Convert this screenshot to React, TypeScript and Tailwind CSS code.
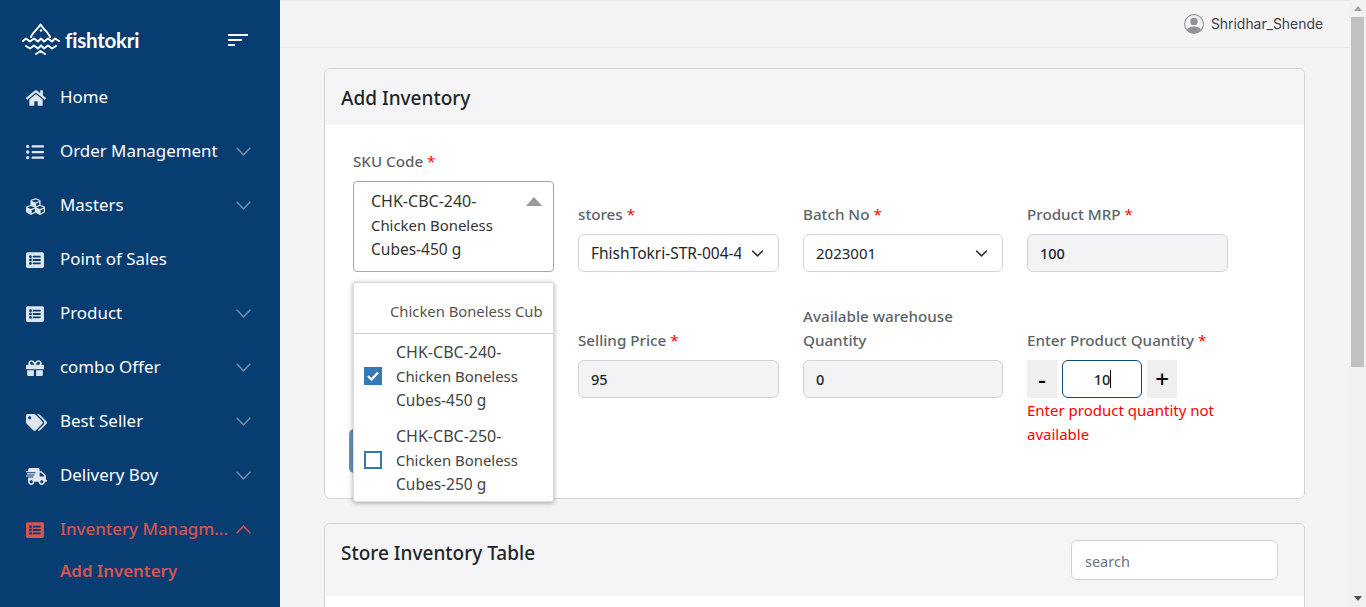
import React from "react";
import { FaHome, FaListUl, FaCubes, FaListAlt, FaGift, FaTags, FaShippingFast } from "react-icons/fa";
import { BsPersonCircle } from "react-icons/bs";

const font = "font-['Noto_Sans','Open_Sans',sans-serif]";

function Logo() {
  return (
    <div className="flex items-center">
      <svg width="38" height="34" viewBox="0 0 38 34" fill="none" stroke="white" strokeWidth="2" strokeLinecap="round" strokeLinejoin="round">
        <path d="M9 14 C10 10 15 7 18.5 1.5 C22 7 27 10 28 14" />
        <circle cx="19" cy="7.5" r="1.2" fill="white" stroke="none" />
        <path d="M1 18 L4 15.5 L8 18.5 L12 15.5 L16 18.5 L19 15.5 L22 18.5 L26 15.5 L30 18.5 L33 15.5 L37 18" />
        <path d="M4 23 L8 25.5 L12 22.5 L16 25.5 L19 22.5 L22 25.5 L26 22.5 L30 25.5 L34 23" />
        <path d="M14 31 L18.5 28 L23 31" />
      </svg>
      <span className="ml-[5px] text-[20.5px] font-bold leading-none tracking-[-0.2px] text-white font-['Lato',sans-serif]">fishtokri</span>
    </div>
  );
}

function Chevron({ up, color }: { up?: boolean; color: string }) {
  return (
    <svg width="15" height="9" viewBox="0 0 15 9" fill="none" stroke={color} strokeWidth="1.5" className="mb-[2px] shrink-0">
      <path d={up ? "M0.7 8.3L7.5 1.2l6.8 7.1" : "M0.7 0.7L7.5 7.8l6.8-7.1"} />
    </svg>
  );
}

function NavItem({ icon, label, arrow = true }: { icon: React.ReactNode; label: string; arrow?: boolean }) {
  return (
    <div className="flex h-[54px] items-center pl-[26px] pr-[29px] text-white">
      <span className="flex w-[34px] items-center text-[#dfe6ee]">{icon}</span>
      <span className="flex-1 pb-[1px] text-[16.9px] leading-none">{label}</span>
      {arrow && <Chevron color="#6f8cab" />}
    </div>
  );
}

function Sidebar() {
  return (
    <aside className="flex w-[280px] shrink-0 flex-col overflow-hidden bg-[#083d72]">
      <div className="flex h-[71px] shrink-0 items-end justify-between pl-[22px] pr-[32px] pb-[14px]">
        <Logo />
        <svg width="20" height="12" viewBox="0 0 20 12" className="mb-[11px] fill-white">
          <rect x="0" y="0" width="20" height="2" />
          <rect x="0" y="5" width="14" height="2" />
          <rect x="0" y="10" width="7" height="2" />
        </svg>
      </div>
      <NavItem icon={<FaHome size={20} />} label="Home" arrow={false} />
      <NavItem icon={<FaListUl size={18} />} label="Order Management" />
      <NavItem icon={<FaCubes size={19} />} label="Masters" />
      <NavItem icon={<FaListAlt size={18} />} label="Point of Sales" arrow={false} />
      <NavItem icon={<FaListAlt size={18} />} label="Product" />
      <NavItem icon={<FaGift size={18} />} label="combo Offer" />
      <NavItem icon={<FaTags size={21} />} label="Best Seller" />
      <NavItem icon={<FaShippingFast size={21} />} label="Delivery Boy" />
      <div className="flex h-[54px] shrink-0 items-center pl-[26px] pr-[29px] text-[#d9534f]">
        <span className="flex w-[34px] items-center"><FaListAlt size={18} /></span>
        <span className="flex-1 whitespace-nowrap pb-[1px] text-[16.9px] font-medium leading-none">Inventery Managm...</span>
        <Chevron up color="#d9534f" />
      </div>
      <div className="pl-[60px] pt-[6px] text-[16.9px] font-semibold leading-none text-[#d9534f]">Add Inventery</div>
    </aside>
  );
}

const labelCls = "block text-[15.2px] font-medium leading-[24px] text-[#5d6369]";
const Star = () => <span className="font-normal text-[#ff0000]"> *</span>;

function Field({ label, children, className = "" }: { label: React.ReactNode; children: React.ReactNode; className?: string }) {
  return (
    <div className={`flex flex-col ${className}`}>
      <label className={labelCls}>{label}</label>
      {children}
    </div>
  );
}

function ReadOnly({ value }: { value: string }) {
  return (
    <div className="mt-[8px] flex h-[38px] items-center rounded-[6px] border border-[#ced4da] bg-[#f3f3f6] px-[12px] pt-[1px] text-[14.5px] font-medium text-[#212529]">{value}</div>
  );
}

function SelectBox({ value, w, size }: { value: string; w: string; size: string }) {
  return (
    <div className={`mt-[8px] flex h-[38px] items-center rounded-[6px] border border-[#ced4da] bg-white pl-[12px] pr-[14px] text-[#212529] ${w}`}>
      <span className={`flex-1 overflow-hidden whitespace-nowrap pt-[1px] ${size}`}>{value}</span>
      <svg width="13" height="13" viewBox="0 0 16 16" fill="none" stroke="#343a40" strokeWidth="2" strokeLinecap="round" strokeLinejoin="round" className="ml-[10px] shrink-0"><path d="M2 5l6 6 6-6" /></svg>
    </div>
  );
}

function Check({ checked }: { checked?: boolean }) {
  return (
    <span className={`flex h-[18px] w-[18px] shrink-0 items-center justify-center border-2 border-[#337ab7] ${checked ? "bg-[#337ab7]" : "bg-white"}`}>
      {checked && (
        <svg width="12" height="10" viewBox="0 0 12 10" fill="none" stroke="white" strokeWidth="2.4"><path d="M1 5l3.5 3.5L11 1.5" /></svg>
      )}
    </span>
  );
}

function SkuLines({ code, tail }: { code: string; tail: string }) {
  return (
    <div className="leading-[24px]">
      <div className="text-[16px]">{code}</div>
      <div className="text-[14.9px]">Chicken Boneless</div>
      <div className="text-[15.5px]">{tail}</div>
    </div>
  );
}

function Option({ checked, code, tail }: { checked?: boolean; code: string; tail: string }) {
  return (
    <div className="flex items-center py-[6px] pl-[10px]">
      <Check checked={checked} />
      <div className="ml-[14px] text-[#444]">
        <SkuLines code={code} tail={tail} />
      </div>
    </div>
  );
}

function SkuColumn() {
  return (
    <div className="relative w-[201px]">
      <label className={labelCls}>SKU Code<Star /></label>
      <div className="relative mt-[8px] flex h-[91px] items-center rounded-[4px] border border-[#a6a6a6] bg-white pb-[4px] pl-[17px] text-[#333]">
        <SkuLines code="CHK-CBC-240-" tail="Cubes-450 g" />
        <span className="absolute right-[11px] top-[15px] h-0 w-0 border-x-[8px] border-b-[9px] border-x-transparent border-b-[#999]" />
      </div>
      <div className="absolute left-[-4px] top-[280px] h-[44px] w-[20px] rounded-[5px] bg-[#6a94bd]" />
      <div className="absolute left-0 top-[133px] z-10 w-[201px] rounded-[3px] border border-[#ddd] bg-white pb-[0px] shadow-[0_1px_5px_rgba(0,0,0,0.35)]">
        <div className="flex h-[51px] items-center overflow-hidden border-b border-[#ccc] pl-[36px] pr-[9px] pt-[6px] text-[14.8px] text-[#555]">
          <span className="overflow-hidden whitespace-nowrap">Chicken Boneless Cub</span>
        </div>
        <Option checked code="CHK-CBC-240-" tail="Cubes-450 g" />
        <div className="-mb-[1px]">
          <Option code="CHK-CBC-250-" tail="Cubes-250 g" />
        </div>
      </div>
    </div>
  );
}

function Card({ title, right, headerCls, children }: { title: string; right?: React.ReactNode; headerCls: string; children?: React.ReactNode }) {
  return (
    <section className="rounded-[6px] border border-[#d3d4d6] bg-white">
      <div className={`flex justify-between rounded-t-[6px] bg-[#f5f5f7] pl-[16px] pr-[26px] ${headerCls}`}>
        <h2 className="text-[19px] font-medium leading-none text-[#212529]">{title}</h2>
        {right}
      </div>
      {children}
    </section>
  );
}

export default function App() {
  return (
    <div className={`flex h-[607px] w-[1366px] overflow-hidden bg-[#f4f4f6] ${font}`}>
      <Sidebar />
      <div className="flex w-[1070px] flex-col overflow-hidden">
        <header className="flex h-[48px] shrink-0 items-center justify-end border-y border-[#eaebee] bg-[#f4f4f7] pr-[27px]">
          <BsPersonCircle size={20} className="text-[#8f949b]" />
          <span className="ml-[7px] pt-[1px] text-[13.9px] text-[#3c4043] font-['Inter',sans-serif]">Shridhar_Shende</span>
        </header>
        <main className="flex flex-col gap-[24px] pl-[44px] pr-[45px] pt-[20px]">
          <Card title="Add Inventory" headerCls="h-[56px] pt-[20px]">
            <div className="relative flex h-[373px] gap-[24px] pl-[28px] pt-[24px]">
              <SkuColumn />
              <div className="flex flex-col">
                <div className="grid grid-cols-[201px_200px_201px] gap-x-[24px] pt-[53px]">
                  <Field label={<>stores<Star /></>}><SelectBox value="FhishTokri-STR-004-4" w="w-[201px]" size="text-[15.5px]" /></Field>
                  <Field label={<>Batch No<Star /></>}><SelectBox value="2023001" w="w-[200px]" size="text-[15px]" /></Field>
                  <Field label={<>Product MRP<Star /></>}><ReadOnly value="100" /></Field>
                </div>
                <div className="mt-[32px] grid grid-cols-[201px_200px_201px] items-start gap-x-[24px]">
                  <div className="pt-[24px]"><Field label={<>Selling Price<Star /></>}><ReadOnly value="95" /></Field></div>
                  <Field label="Available warehouse Quantity"><ReadOnly value="0" /></Field>
                  <div className="pt-[24px]">
                    <Field label={<>Enter Product Quantity<Star /></>}>
                      <div className="mt-[8px] flex h-[38px] w-[150px] items-stretch gap-[5px]">
                        <button className="flex w-[30px] items-center justify-center bg-[#efefef] text-[24px] font-medium leading-none text-black">-</button>
                        <div className="flex w-[80px] items-center justify-center rounded-[6px] border border-[#0a4a86] bg-white pl-[1px] text-[14.5px] font-medium text-[#212529]">
                          <span className="pt-[1px]">10</span><span className="h-[18px] w-px bg-black" />
                        </div>
                        <button className="flex w-[30px] items-center justify-center bg-[#efefef] text-[24px] font-medium leading-none text-black">+</button>
                      </div>
                    </Field>
                    <div className="text-[15px] leading-[24px] text-[#ff0000]">Enter product quantity not available</div>
                  </div>
                </div>
              </div>
            </div>
          </Card>
          <Card
            title="Store Inventory Table"
            headerCls="h-[72px] pt-[20px]"
            right={
              <div className="mt-[-4px] flex h-[40px] w-[207px] items-center rounded-[6px] border border-[#ced4da] bg-white px-[13px] pt-[4px] text-[14.5px] text-[#6c757d]">search</div>
            }
          >
            <div className="h-[40px]" />
          </Card>
        </main>
      </div>
      <div className="relative w-[16px] shrink-0 bg-[#f1f1f1]">
        <span className="absolute left-[4px] top-[6px] h-0 w-0 border-x-[4px] border-b-[5px] border-x-transparent border-b-[#a3a3a3]" />
        <div className="absolute left-[1px] top-[17px] h-[350px] w-[13px] bg-[#c1c1c1]" />
        <span className="absolute bottom-[6px] left-[4px] h-0 w-0 border-x-[4px] border-t-[5px] border-x-transparent border-t-[#505050]" />
      </div>
    </div>
  );
}
